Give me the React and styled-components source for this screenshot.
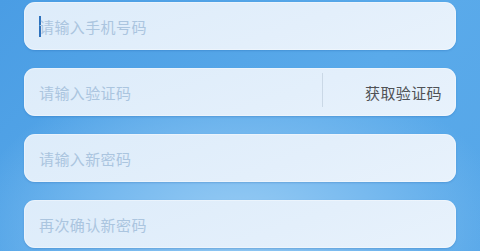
import React from 'react';
import styled, { createGlobalStyle } from 'styled-components';

const Global = createGlobalStyle`
  html, body {
    margin: 0;
    padding: 0;
  }
  body {
    font-family: "Noto Sans CJK SC", "Noto Sans", sans-serif;
  }
`;

const Page = styled.div`
  width: 480px;
  height: 251px;
  overflow: hidden;
  box-sizing: border-box;
  padding: 2px 24px 0;
  display: flex;
  flex-direction: column;
  gap: 18px;
  background:
    radial-gradient(ellipse 70% 80% at 50% 90%, #98ccf4 0%, #78baef 40%, rgba(90, 168, 234, 0) 80%),
    linear-gradient(135deg, #4a9de4 0%, #5aaaea 60%, #55a6e8 100%);
`;

const Field = styled.div`
  height: 48px;
  flex-shrink: 0;
  border-radius: 11px;
  display: flex;
  align-items: center;
  padding: 0 14px 0 15px;
  background: linear-gradient(160deg, #ddecfa 0%, #e3effb 60%, #e8f2fc 100%);
  box-shadow: 0 1px 2px rgba(30, 95, 170, 0.28), inset 0 0 0 1px rgba(255, 255, 255, 0.35);
`;

const Placeholder = styled.span`
  flex: 1;
  font-size: 15px;
  letter-spacing: 0.4px;
  color: #abc5df;
  line-height: 1;
  display: flex;
  align-items: center;
`;

// text caret shown in the focused field
const Caret = styled.i`
  width: 2px;
  height: 21px;
  margin-right: -2px;
  background: #2e72bd;
`;

const Divider = styled.div`
  width: 1px;
  height: 34px;
  margin-top: -4px;
  background: #cad8e6;
`;

const CodeButton = styled.button`
  border: 0;
  background: none;
  padding: 0;
  margin-left: 42px;
  font-family: inherit;
  font-size: 15px;
  letter-spacing: 0.4px;
  color: #4f5256;
  cursor: pointer;
`;

export default function App() {
  return (
    <>
      <Global />
      <Page>
        <Field>
          <Placeholder>
            <Caret />
            请输入手机号码
          </Placeholder>
        </Field>
        <Field>
          <Placeholder>请输入验证码</Placeholder>
          <Divider />
          <CodeButton>获取验证码</CodeButton>
        </Field>
        <Field>
          <Placeholder>请输入新密码</Placeholder>
        </Field>
        <Field>
          <Placeholder>再次确认新密码</Placeholder>
        </Field>
      </Page>
    </>
  );
}
